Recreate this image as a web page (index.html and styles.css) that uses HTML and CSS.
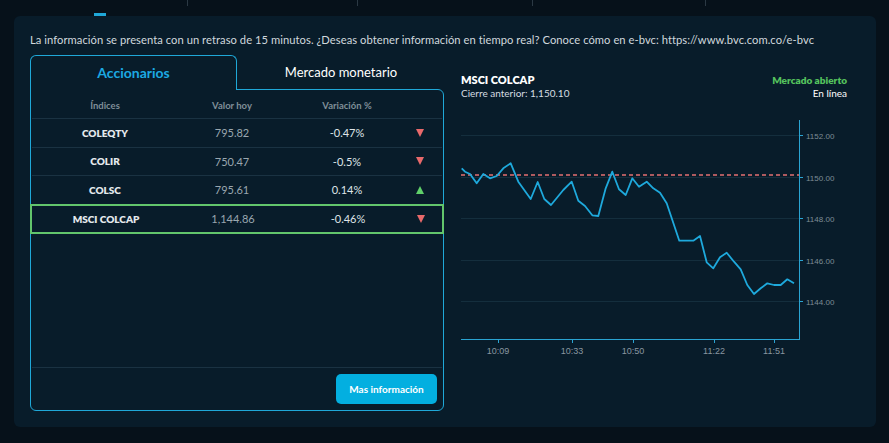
FILE: index.html
```
<!DOCTYPE html>
<html lang="es">
<head>
<meta charset="utf-8">
<title>Índices</title>
<link rel="stylesheet" href="styles.css">
</head>
<body>
<div class="topstrip">
  <span class="indicator"></span>
  <span class="tick t1"></span>
  <span class="tick t2"></span>
  <span class="tick t3"></span>
  <span class="tick t4"></span>
</div>
<main class="card">
  <p class="notice">La información se presenta con un retraso de 15 minutos. ¿Deseas obtener información en tiempo real? Conoce cómo en e-bvc: https://www.bvc.com.co/e-bvc</p>
  <div class="content">
    <section class="panel">
      <div class="tabs">
        <div class="tab active">Accionarios</div>
        <div class="tab">Mercado monetario</div>
      </div>
      <div class="panel-body">
        <div class="table">
          <div class="row head">
            <span>Índices</span><span>Valor hoy</span><span>Variación %</span><span></span>
          </div>
          <div class="row">
            <span class="name">COLEQTY</span><span class="val">795.82</span><span class="var">-0.47%</span><span class="arrow"><i class="down"></i></span>
          </div>
          <div class="row">
            <span class="name">COLIR</span><span class="val">750.47</span><span class="var">-0.5%</span><span class="arrow"><i class="down"></i></span>
          </div>
          <div class="row">
            <span class="name">COLSC</span><span class="val">795.61</span><span class="var">0.14%</span><span class="arrow"><i class="up"></i></span>
          </div>
          <div class="row selected">
            <span class="name">MSCI COLCAP</span><span class="val">1,144.86</span><span class="var">-0.46%</span><span class="arrow"><i class="down"></i></span>
          </div>
        </div>
        <div class="footer">
          <button class="more">Mas información</button>
        </div>
      </div>
    </section>
    <section class="chart">
      <div class="chart-head">
        <div>
          <div class="title">MSCI COLCAP</div>
          <div class="sub">Cierre anterior: 1,150.10</div>
        </div>
        <div class="status">
          <div class="open">Mercado abierto</div>
          <div class="sub">En línea</div>
        </div>
      </div>
      <svg class="plot" width="399" height="255" viewBox="461 110 399 255">
        <g class="grid">
          <line x1="461" y1="135.5" x2="799" y2="135.5"/>
          <line x1="461" y1="177.5" x2="799" y2="177.5"/>
          <line x1="461" y1="218.5" x2="799" y2="218.5"/>
          <line x1="461" y1="260.5" x2="799" y2="260.5"/>
          <line x1="461" y1="301.5" x2="799" y2="301.5"/>
        </g>
        <line class="prev" x1="461" y1="175" x2="799" y2="175"/>
        <polyline class="series" points="461.7,168.3 465,171.7 470,174 476.7,183.3 483.3,174 490,178.3 496.7,176 503.3,168.3 510.7,163.3 518.3,181.7 530.7,199 537.7,182 544.3,199 551,205 563.3,190 571.7,181.7 578.3,200.7 585,206 592.3,215.3 598.3,216 605.7,188.3 612.3,171.7 619,189.3 625.7,195 632.3,178.3 639,186.7 646.7,181.7 653.3,188.3 660,192.7 666.7,203.3 679.3,240.7 693.3,240.7 700,236 706.7,262.3 713.3,268.3 720,257.3 726.7,252.7 734,261.7 740.7,269.3 747.3,285 754,294 760.7,288.3 767.3,283.3 774,285 780.7,285 787.3,279.3 794,283.3"/>
        <g class="axis">
          <line x1="799.5" y1="120" x2="799.5" y2="340"/>
          <line x1="461" y1="339.5" x2="800" y2="339.5"/>
          <line x1="799" y1="135.5" x2="803" y2="135.5"/>
          <line x1="799" y1="177.5" x2="803" y2="177.5"/>
          <line x1="799" y1="218.5" x2="803" y2="218.5"/>
          <line x1="799" y1="260.5" x2="803" y2="260.5"/>
          <line x1="799" y1="301.5" x2="803" y2="301.5"/>
          <line x1="498.5" y1="339" x2="498.5" y2="343"/>
          <line x1="572.5" y1="339" x2="572.5" y2="343"/>
          <line x1="633.5" y1="339" x2="633.5" y2="343"/>
          <line x1="714.5" y1="339" x2="714.5" y2="343"/>
          <line x1="774.5" y1="339" x2="774.5" y2="343"/>
        </g>
        <g class="ylab">
          <text x="806" y="138.5">1152.00</text>
          <text x="806" y="180.5">1150.00</text>
          <text x="806" y="221.5">1148.00</text>
          <text x="806" y="263.5">1146.00</text>
          <text x="806" y="304.5">1144.00</text>
        </g>
        <g class="xlab">
          <text x="498" y="354">10:09</text>
          <text x="572" y="354">10:33</text>
          <text x="633" y="354">10:50</text>
          <text x="714" y="354">11:22</text>
          <text x="774" y="354">11:51</text>
        </g>
      </svg>
    </section>
  </div>
</main>
</body>
</html>
```
FILE: styles.css
```
* { box-sizing: border-box; }
html, body { margin: 0; padding: 0; }
body {
  background: #06111a;
  font-family: Lato, "Open Sans", "Noto Sans", sans-serif;
  color: #d6dde2;
  width: 889px;
  height: 443px;
  overflow: hidden;
}
.topstrip {
  height: 16px;
  display: flex;
  align-items: flex-start;
}
.indicator {
  width: 12px;
  height: 3px;
  background: #1fa8d8;
  margin: 13px 0 0 94px;
}
.tick {
  width: 1px;
  height: 6px;
  background: #2b3944;
}
.t1 { margin-left: 81px; }
.t2 { margin-left: 169px; }
.t3 { margin-left: 174px; }
.t4 { margin-left: 172px; }

.card {
  margin: 0 13px 0 14px;
  height: 411px;
  background: #081c2a;
  border-radius: 6px;
  padding: 16px 16px 0 16px;
}
.notice {
  margin: 0;
  font-size: 11.2px;
  line-height: 16px;
  color: #d0d8dd;
  white-space: nowrap;
  letter-spacing: 0.05px;
}
.content {
  display: flex;
  gap: 17px;
  margin-top: 7px;
}
.panel {
  width: 414px;
  height: 356px;
  display: flex;
  flex-direction: column;
}
.tabs {
  display: flex;
  height: 35px;
}
.tab {
  height: 34px;
  display: flex;
  align-items: center;
  justify-content: center;
  font-size: 13px;
  color: #ffffff;
}
.tab.active {
  width: 207px;
  height: 35px;
  border: 1px solid #1fa8d8;
  border-bottom: none;
  border-radius: 6px 6px 0 0;
  background: #081c2a;
  color: #1ca9e2;
  font-size: 14px;
  font-weight: 700;
  position: relative;
  z-index: 1;
  padding-bottom: 1px;
}
.tab:not(.active) {
  flex: 1;
  padding-left: 1px;
}
.panel-body {
  flex: 1;
  margin-top: -1px;
  border: 1px solid #1fa8d8;
  border-radius: 0 6px 6px 6px;
  display: flex;
  flex-direction: column;
  padding: 0 1px;
}
.table { flex: 1; }
.row {
  display: grid;
  grid-template-columns: 146px 108px 122px 34px;
  height: 28.6px;
  align-items: center;
  border-bottom: 1px solid #1a3242;
  font-size: 11px;
}
.row > span { text-align: center; }
.row.head {
  height: 29px;
  padding-top: 3px;
  font-size: 9.5px;
  font-weight: 700;
  color: #7f8e98;
}
.name {
  font-weight: 800;
  font-size: 10px;
  color: #e4e9ec;
}
.val { color: #9aa7af; }
.var { color: #dfe5e8; }
.row .arrow {
  text-align: left;
  padding-left: 8px;
  display: flex;
  align-items: center;
}
.down {
  display: block;
  width: 0; height: 0;
  border-left: 4.5px solid transparent;
  border-right: 4.5px solid transparent;
  border-top: 8px solid #e8696b;
}
.up {
  display: block;
  width: 0; height: 0;
  border-left: 4.5px solid transparent;
  border-right: 4.5px solid transparent;
  border-bottom: 8px solid #5fd06a;
}
.row.selected {
  height: 30px;
  margin: 0 -2px;
  padding: 0 1px;
  border: 2px solid #62c56c;
  margin-top: -1px;
}
.footer {
  border-top: 1px solid #1a3242;
  display: flex;
  justify-content: flex-end;
  padding: 6px 5px 6px 0;
}
.more {
  width: 101px;
  height: 30px;
  border: none;
  border-radius: 5px;
  background: #03afe0;
  color: #ffffff;
  font-family: Lato, "Open Sans", sans-serif;
  font-weight: 700;
  font-size: 10px;
  padding: 0;
}

.chart {
  flex: 1;
  padding-top: 18px;
}
.chart-head {
  display: flex;
  justify-content: space-between;
  padding-right: 13px;
}
.title {
  font-size: 11px;
  font-weight: 800;
  color: #ffffff;
  line-height: 14px;
}
.sub {
  font-size: 10px;
  line-height: 13px;
  color: #d6dde2;
}
.status { text-align: right; }
.status .sub { color: #ffffff; }
.open {
  font-size: 10px;
  font-weight: 800;
  color: #55c25d;
  line-height: 14px;
}
.plot {
  display: block;
  margin-top: 10px;
}
.grid line { stroke: #142e3d; stroke-width: 1; }
.prev { stroke: #e46f72; stroke-width: 1.6; stroke-dasharray: 4 3; }
.series { fill: none; stroke: #1ea9dc; stroke-width: 1.8; stroke-linejoin: round; }
.axis line { stroke: #2aa4d2; stroke-width: 1; }
.ylab text { font-family: "Liberation Sans", sans-serif; font-size: 8px; fill: #7d8c96; }
.xlab text { font-family: "Liberation Sans", sans-serif; font-size: 9px; fill: #8896a0; text-anchor: middle; }
```
